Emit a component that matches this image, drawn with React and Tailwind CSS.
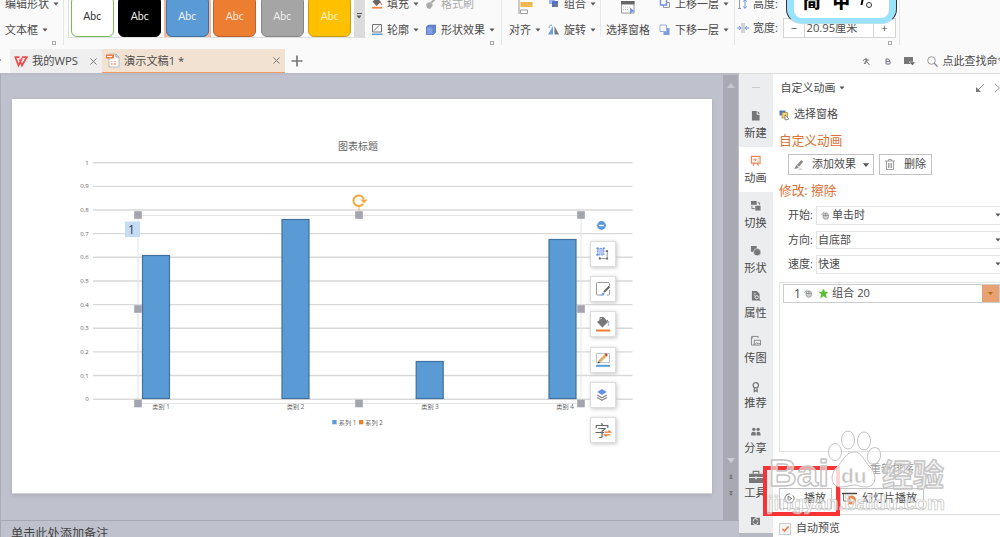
import React from "react";

const Caret = ({ className = "" }) => (
  <svg viewBox="0 0 6 4" className={"h-[4px] w-[6px] shrink-0 " + className} fill="#555">
    <path d="M0.5 0.5h5L3 3.5z" />
  </svg>
);

const Icon = ({ children, className = "h-[12px] w-[12px]", box = "0 0 12 12" }) => (
  <svg viewBox={box} className={"shrink-0 overflow-visible " + className} fill="none">
    {children}
  </svg>
);

const FillIcon = () => (
  <Icon>
    <path d="M1.5 3.500 6 0l4 4-4.500 4z" fill="#666" />
    <path d="M9 4l2 3" stroke="#d66" />
    <path d="M1 9.700h10" stroke="#f08a4b" strokeWidth="1.800" />
  </Icon>
);
const OutlineIcon = () => (
  <Icon>
    <path d="M1.500 .500h9v7.500h-9zM3 6.500l5-5" stroke="#777" />
    <path d="M1 10.300h10.500" stroke="#5aa1de" strokeWidth="1.600" />
  </Icon>
);
const BrushIcon = () => (
  <Icon>
    <path d="M1 6l4-2 3 3-3 4-3-1z" fill="#aaa" />
    <path d="M6 5l4-4" stroke="#aaa" strokeWidth="2" />
  </Icon>
);
const CubeIcon = () => (
  <Icon>
    <path d="M1 3h7v8H1z" fill="#7e9de6" />
    <path d="M1 3l2-2h8L8 3zM8 3l3-2v7l-3 3z" fill="#6a8ad6" />
    <path d="M1.500 3h6.500v7.500h-6.500zM8 3l2.500-2v7.500L8 10.500M2 3l1.500-2h7" stroke="#5b76b5" strokeWidth=".6" />
  </Icon>
);
const GroupIcon = () => (
  <Icon>
    <path d="M1 0h6v6H1z" fill="#9fb6ee" />
    <path d="M4 3h6v6H4z" fill="#5671bd" />
    <path d="M7 6h3v3H7z" fill="#777" />
  </Icon>
);
const RotateIcon = () => (
  <Icon>
    <path d="M5 2v8.500H0z" fill="#6aa0e8" />
    <path d="M6.500 2v8.500H11z" fill="#777" />
    <path d="M1 4c0-2 1-3 3-3" stroke="#6aa0e8" />
  </Icon>
);
const ForwardIcon = () => (
  <Icon>
    <path d="M4.500 4.500h6v5h-6z" fill="#fff" stroke="#999" />
    <path d="M1.500 1h6v6h-6z" fill="#fff" stroke="#7292e4" strokeWidth="1.500" />
  </Icon>
);
const BackwardIcon = () => (
  <Icon>
    <path d="M4.500 4h6v7h-6z" fill="#7f9be6" />
    <path d="M1 1h6.500v6.500H1z" fill="#fff" stroke="#9aaee0" />
  </Icon>
);

const Sep = ({ className = "h-[45px]" }) => <div className={"w-px shrink-0 bg-[#e6e6e6] " + className} />;

const Cmd = ({ icon, children, className = "", muted, caret = true }) => (
  <div className={"flex h-[26px] items-center whitespace-nowrap " + className}>
    {icon}
    <span className={"relative top-[.5px] " + (icon ? (muted ? "ml-[4px] text-[#aaa]" : "ml-[4px]") : "")}>{children}</span>
    {caret && <Caret className="ml-[4px]" />}
  </div>
);

const Launcher = () => <div className="mr-[7px] ml-auto h-[4px] w-[4px] shrink-0 border border-[#aaa]" />;

const swatches = [
  "bg-white border-[#78ba58] text-[#333]",
  "bg-black border-black text-[#eee]",
  "bg-[#5b9bd5] border-[#41719c] text-[#f2f2f2]",
  "bg-[#ed7d31] border-[#b96330] text-[#f9e7dc]",
  "bg-[#a5a5a5] border-[#858585] text-[#eee]",
  "bg-[#ffc000] border-[#c79b16] text-[#fff3c9]",
];

function Ribbon() {
  return (
    <div className="flex h-[49px] shrink-0 overflow-hidden">
      <div className="flex w-[63px] shrink-0 flex-col">
        <Cmd className="-mt-[9px] pl-[5px]">编辑形状</Cmd>
        <Cmd className="pl-[5px]">文本框</Cmd>
        <div className="-mt-[2px] flex"><Launcher /></div>
      </div>
      <Sep />
      <div className="ml-[3.500px] flex h-[38px] w-[298px] shrink-0 border-b border-l border-[#e0e0e0] bg-white">
        {swatches.map((s, i) => (
          <div key={i} className={"flex h-[37px] w-[47.500px] shrink-0 justify-center " + (i === 2 ? "bg-[#f3b8a0]" : "")}>
            <div className={"-mt-[4px] flex h-[41px] w-[43px] items-center justify-center rounded-[6px] border-[1.500px] font-['Lato','Open_Sans',sans-serif] text-[10.500px] " + s}>
              <span className="mt-[1px]">Abc</span>
            </div>
          </div>
        ))}
        <div className="flex w-[11px] flex-col items-center bg-[#dcdcdc] pt-[13px]">
          <div className="mb-[1px] h-px w-[5px] bg-[#555]" />
          <Caret />
        </div>
      </div>
      <div className="flex w-[135.500px] shrink-0 flex-col pl-[5.500px]">
        <div className="-mt-[9px] flex">
          <Cmd className="w-[54px]" icon={<FillIcon />}>填充</Cmd>
          <Cmd icon={<BrushIcon />} muted caret={false}>格式刷</Cmd>
        </div>
        <div className="flex">
          <Cmd className="w-[54px]" icon={<OutlineIcon />}>轮廓</Cmd>
          <Cmd icon={<CubeIcon />}>形状效果</Cmd>
        </div>
        <div className="-mt-[2px] flex"><Launcher /></div>
      </div>
      <Sep />
      <div className="flex w-[98px] shrink-0">
        <div className="flex w-[46px] flex-col pl-[7px]">
          <div className="h-[17px] pl-[9px]">
            <Icon className="h-[15px] w-[15px]" box="0 0 15 15">
              <path d="M1 0v14" stroke="#999" />
              <path d="M2.500 2h12v5h-12z" fill="#f4b64e" />
              <path d="M2.500 10h7v3.500h-7z" fill="#fff" stroke="#999" />
            </Icon>
          </div>
          <Cmd>对齐</Cmd>
        </div>
        <div className="flex flex-col">
          <Cmd className="-mt-[9px]" icon={<GroupIcon />}>组合</Cmd>
          <Cmd icon={<RotateIcon />}>旋转</Cmd>
        </div>
      </div>
      <Sep className="h-[36px]" />
      <div className="flex w-[133px] shrink-0">
        <div className="flex w-[57px] flex-col pl-[5px]">
          <div className="h-[17px] pl-[14px]">
            <Icon className="h-[15px] w-[15px]" box="0 0 15 15">
              <path d="M1.500 1.500h12.500v11.500h-12.500z" fill="#fff" stroke="#999" />
              <path d="M1 1h13.500v3.500H1z" fill="#666" />
              <path d="M3 7h8M3 9.500h5" stroke="#bbb" strokeDasharray="1 1" />
              <path d="M10 7.500l5 4-3 .500-2 2.500z" fill="#7394e6" />
            </Icon>
          </div>
          <Cmd caret={false}>选择窗格</Cmd>
        </div>
        <div className="flex flex-col pl-[1px]">
          <Cmd className="-mt-[9px]" icon={<ForwardIcon />}>上移一层</Cmd>
          <Cmd icon={<BackwardIcon />}>下移一层</Cmd>
        </div>
      </div>
      <Sep />
      <div className="flex w-[164px] shrink-0 flex-col pl-[2px]">
        <Cmd
          className="-mt-[9px]"
          caret={false}
          icon={
            <Icon>
              <path d="M2.500 1v10M1 1.500h3M1 10.500h3" stroke="#999" />
              <path d="M8 2v8M6.500 3.500 8 1.500l1.500 2M6.500 8.500 8 10.500l1.500-2" stroke="#6a92e2" />
            </Icon>
          }
        >
          高度:
        </Cmd>
        <div className="flex items-center">
          <Cmd
            className="-mt-[2px] w-[46px]"
            caret={false}
            icon={
              <Icon>
                <path d="M5 1v10M7 1v10" stroke="#aaa" />
                <path d="M0 6h4M8 6h4M2 4l2 2-2 2M10 4 8 6l2 2" stroke="#6a92e2" />
              </Icon>
            }
          >
            宽度:
          </Cmd>
          <div className="-mt-[3px] flex h-[20px] w-[113px] items-center border border-[#d4d4d4] bg-white text-center leading-[18px]">
            <span className="h-full w-[21px] border-r border-[#d4d4d4]">−</span>
            <span className="h-full flex-1 pl-[1.500px] text-left text-[11.200px]">20.95厘米</span>
            <span className="h-full w-[22px] border-l border-[#d4d4d4]">+</span>
          </div>
        </div>
        <div className="flex"><Launcher /></div>
      </div>
      <Sep />
    </div>
  );
}

function InputMethodBar() {
  return (
    <div className="absolute -top-[30px] left-[786px] flex h-[54px] w-[111px] rounded-[15px] border-x-[1.500px] border-b border-[#333] border-b-[#b9dfee] bg-[#9be2fd] px-[7px] pb-[5px]">
      <div className="flex flex-1 items-end rounded-[8px] bg-white pb-[7.500px] pl-[9px] text-[17.500px] leading-[20px] font-black text-black">
        <span>简</span>
        <span className="ml-[12px]">中</span>
        <span className="ml-[11px] flex items-center pb-[3px]">
          <span className="h-[5px] w-[2px] -skew-x-12 bg-black" />
          <span className="mt-[5px] ml-[3px] h-[6px] w-[6px] rounded-full border border-[#333]" />
        </span>
      </div>
    </div>
  );
}

const Close = () => (
  <Icon className="h-[7px] w-[7px]" box="0 0 7 7">
    <path d="M.5.500l6 6M6.500.500l-6 6" stroke="#777" />
  </Icon>
);

function TabBar() {
  return (
    <div className="flex h-[24px] shrink-0 items-center">
      <div className="flex w-[10px]"><Caret className="-ml-[4px]" /></div>
      <div className="flex h-full w-[92px] items-center bg-[#efefef] pr-[5px] pl-[4px]">
        <Icon className="h-[11px] w-[14px]" box="0 0 14 11">
          <path d="M.5 1.200h5M1.500 1.500l3 8L8 2M5.500 3.500l2.500 6 4.500-8M8 1.200h5.800" stroke="#ef4a4c" strokeWidth="1.700" />
        </Icon>
        <span className="mt-[1px] ml-[4px] text-[11.300px]">我的WPS</span>
        <span className="ml-auto"><Close /></span>
      </div>
      <div className="flex h-full w-[183px] items-center border-b border-[#ee9c6c] bg-[#f2e2d2] pr-[5px] pl-[4px]">
        <Icon className="h-[15px] w-[14px]" box="0 0 14 15">
          <path d="M3 1h7l3 3v10H3z" fill="#fff" stroke="#bbb" />
          <path d="M10 1v3h3" stroke="#999" />
          <path d="M0 1.500h8V5.500H0z" fill="#ed7b45" />
          <path d="M1 3.500h5" stroke="#fff" />
          <path d="M5 8h5v4H5z" fill="#f3b493" />
          <path d="M5 9.500h6M7 8v5" stroke="#fff" />
        </Icon>
        <span className="mt-[2px] ml-[4px] text-[11.200px]">演示文稿1 *</span>
        <span className="ml-auto"><Close /></span>
      </div>
      <Icon className="ml-[6px] h-[12px] w-[12px]">
        <path d="M6 .500v11M.500 6h11" stroke="#777" strokeWidth="1.700" />
      </Icon>
      <div className="ml-auto flex h-full w-[137px] items-center whitespace-nowrap">
        <Icon className="h-[7px] w-[7px]" box="0 0 7 7">
          <path d="M0 2.500 3 1v2L1 6M3 0l1 4 2.500 3M4 2h2M3.500 3.500 2 6" stroke="#777" />
        </Icon>
        <Icon className="ml-[15px] h-[7px] w-[6px]" box="0 0 6 7">
          <path d="M1 1h2.500L5 3v3H1zM1 3.500h4" stroke="#777788" />
        </Icon>
        <Icon className="ml-[13px] h-[10px] w-[12px]" box="0 0 12 10">
          <path d="M0 1h9v7H0z" fill="#777" />
          <path d="M5 6h6.500L8.500 9.500z" fill="#666" stroke="#fafafa" strokeWidth=".5" />
        </Icon>
        <div className="ml-[5px] h-[15px] w-px bg-[#ddd]" />
        <Icon className="ml-[6px] h-[11px] w-[11px]" box="0 0 11 11">
          <circle cx="4.500" cy="4.500" r="3.800" stroke="#999" />
          <path d="M7.300 7.300 10.500 10.500" stroke="#888" strokeWidth="1.300" />
        </Icon>
        <span className="ml-[4.500px] text-[11px]">点此查找命令</span>
      </div>
    </div>
  );
}

const ticks = ["1", "0.9", "0.8", "0.7", "0.6", "0.5", "0.4", "0.3", "0.2", "0.1", "0"];
const bars = [
  { x: 130.500, top: 156.500, label: "类别 1", lx: 149 },
  { x: 270, top: 120.500, label: "类别 2", lx: 283.500 },
  { x: 404.200, top: 262.500, label: "类别 3", lx: 418 },
  { x: 537, top: 140.500, label: "类别 4", lx: 553 },
];
const handles = [
  [126, 116], [347, 116], [569, 116], [126, 210], [569, 210], [126, 304.500], [347, 304.500], [569, 304.500],
];

function Chart() {
  return (
    <svg viewBox="0 0 700 394" className="h-[394px] w-[700px]" fill="none">
      <g fill="#666" fontSize="6.200">
        <text x="346" y="50.500" fontSize="10" textAnchor="middle">图表标题</text>
        {ticks.map((t, i) => (
          <g key={t}>
            <path d={"M81 " + (63.700 + i * 23.650) + "H620.500"} stroke="#d9d9d9" strokeWidth="1.400" />
            <text x="76.800" y={65.700 + i * 23.650} fontSize="6" textAnchor="end">{t}</text>
          </g>
        ))}
        {bars.map((b) => (
          <g key={b.label}>
            <rect x={b.x} y={b.top} width="27" height={299.500 - b.top} fill="#5b9bd5" stroke="#41719c" strokeWidth="1.200" />
            <text x={b.lx} y="310.300" textAnchor="middle">{b.label}</text>
          </g>
        ))}
        <rect x="320.300" y="321" width="4.300" height="4.300" fill="#5b9bd5" />
        <text x="326.800" y="325.500">系列 1</text>
        <rect x="347" y="321" width="4.300" height="4.300" fill="#ed7d31" />
        <text x="353.300" y="325.500">系列 2</text>
      </g>
      <rect x="126" y="116.500" width="443" height="188" stroke="#e4e4e4" strokeWidth="1" />
      {handles.map(([x, y]) => (
        <rect key={x + "-" + y} x={x - 3.800} y={y - 3.800} width="7.600" height="7.600" fill="#a2a4ae" />
      ))}
      <path d="M347 112v-5" stroke="#f5b34e" />
      <path d="M351 104.800a5.300 5.300 0 1 1 .800-4.500" stroke="#f4a83c" strokeWidth="2" />
      <path d="M348.500 100.500h7l-3.500 4z" fill="#f4a83c" />
      <rect x="113" y="122.500" width="15" height="15.500" fill="#c5dcf6" />
      <text x="119.500" y="134.500" fontSize="12" textAnchor="middle" fill="#334">1</text>
    </svg>
  );
}

const tools = [
  <Icon key="a" className="h-[13px] w-[13px]" box="1 1 14 14">
    <path d="M2.500 2.500h7v7h-7z" fill="#b7c9f5" stroke="#6a8de8" strokeDasharray="2 1" />
    <path d="M11 5.500h2v8H5v-2" stroke="#888" />
    <path d="M1.500 1.500h2v2h-2zM8.500 1.500h2v2h-2zM1.500 8.500h2v2h-2z" fill="#6a8de8" />
    <path d="M12 4.500h2v2h-2zM12 12.500h2v2h-2zM4 12.500h2v2H4z" fill="#666" />
  </Icon>,
  <Icon key="b" className="h-[16px] w-[16px]" box="0 0 16 16">
    <path d="M6 14H2.500Q1.500 14 1.500 13V2.500q0-1 1-1h11q1 0 1 1V5M14.500 9v4q0 1-1 1H12" stroke="#999" />
    <path d="M14.500 5.500 9 11" stroke="#666" strokeWidth="2" />
    <path d="M5.500 14.500c1 0 1-3 3-3l1 1c0 2-2 2.500-4 2z" fill="#6a9be8" />
  </Icon>,
  <Icon key="c" className="h-[16px] w-[16px]" box="0 0 16 16">
    <path d="M2 6 8.500 1 13 6l-5.500 5.500z" fill="#777" />
    <path d="M5 4V1.500h3M12 4q2 1 1.500 4" stroke="#777" />
    <path d="M13.500 5v5" stroke="#a7bbe8" strokeWidth="1.500" />
    <path d="M1 14.500h14" stroke="#ed7d31" strokeWidth="2" />
  </Icon>,
  <Icon key="d" className="h-[16px] w-[16px]" box="0 0 16 16">
    <path d="M1.500 1.500h13v9h-13z" fill="#fff" stroke="#b9c4ce" />
    <path d="M4 10 11 3" stroke="#e5ad66" strokeWidth="2.800" />
    <path d="M10.500 3.500 12 2" stroke="#c64d42" strokeWidth="2.800" />
    <path d="M2.500 11.500 5 10.800 3.300 9z" fill="#555" />
    <path d="M1 13.800h14" stroke="#5b9bd5" strokeWidth="2" />
  </Icon>,
  <Icon key="e" className="-ml-[2px] h-[12px] w-[12px]" box="1 1 14 15">
    <path d="M8 1l6 3.700-6 3.800-6-3.800z" fill="#6a8fe4" />
    <path d="M2 8.500 8 12l6-3.500M2 11.500 8 15l6-3.500" stroke="#888" strokeWidth="1.500" />
  </Icon>,
];

function Slide() {
  return (
    <div className="relative mt-[26px] ml-[12px] h-[395px] w-[700px] border-b border-[#d2d3d8] bg-white shadow-[0_1px_4px_#a6a8b2]">
      <Chart />
      <div className="absolute top-[121.500px] left-[577.500px] flex flex-col items-center">
        <Icon className="-ml-[2px] h-[9px] w-[9px]" box="0 0 9 9">
          <circle cx="4.500" cy="4.500" r="4.400" fill="#5d98df" />
          <path d="M2 4.500h5" stroke="#fff" strokeWidth="1.400" />
        </Icon>
        <div className="mt-[11px] flex flex-col gap-[9.400px]">
          {tools.map((t, i) => (
            <div key={i} className="flex h-[26px] w-[26px] items-center justify-center border border-[#ddd] bg-white shadow-[1px_1px_4px_#c6c6c6]">
              {t}
            </div>
          ))}
          <div className="flex h-[26px] w-[26px] items-center justify-center border border-[#ddd] bg-white text-[15px] leading-none text-[#666] shadow-[1px_1px_4px_#c6c6c6]">
            字
            <Icon className="mt-[6px] -ml-[6px] h-[7px] w-[7px]" box="0 0 7 7">
              <path d="M0 0h7v7H0z" fill="#fff" />
              <path d="M.5 2.200h6L4.500.500M6.500 4.800h-6l2 1.700" stroke="#ed7d31" strokeWidth="1.200" />
            </Icon>
          </div>
        </div>
      </div>
    </div>
  );
}

function Stage() {
  return (
    <div className="flex w-[739px] shrink-0 flex-col border-t-2 border-[#b9bbc5] bg-[#bfc2cc]">
      <div className="flex h-[445px]">
        <div className="-mt-[2px] w-[723px] shrink-0 border-l border-[#abaeb8]">
          <div className="-ml-[1px]"><Slide /></div>
        </div>
        <div className="flex w-[15px] flex-col items-center bg-[#a9a9b3] pt-[8px]">
          <Icon className="h-[5px] w-[8px]" box="0 0 8 5"><path d="M0 5h8L4 0z" fill="#c6c6ce" /></Icon>
          <Icon className="mt-[370px] h-[5px] w-[8px]" box="0 0 8 5"><path d="M0 0h8L4 5z" fill="#cdcdd3" /></Icon>
          <Icon className="mt-[11px] h-[5px] w-[4px]" box="0 0 5 6"><path d="M0 3l2.500-3L5 3zM0 6l2.500-3L5 6z" fill="#777" /></Icon>
          <Icon className="mt-[12px] h-[5px] w-[4px]" box="0 0 5 6"><path d="M0 0l2.500 3L5 0zM0 3l2.500 3L5 3z" fill="#777" /></Icon>
        </div>
      </div>
      <div className="flex-1 overflow-hidden border-t border-l border-[#a6a9b3] pt-[4px] pl-[10px] text-[12.200px] leading-[18px] whitespace-nowrap text-[#444]">
        单击此处添加备注
      </div>
    </div>
  );
}

const side = [
  ["新建", <path key="p" d="M2 1h5v4h3v6H2zM8 1l2.500 3H8z" fill="#777" />],
  ["动画", <g key="p" stroke="#ee8550"><path d="M1.500 1.500h9v7h-9zM3 11l1.500-2M9 11 7.500 9" strokeWidth="1.200" /><path d="M3 5h3.500M5 3.500 6.500 5 5 6.500M8 3.500h1M8 6.500h1" /></g>],
  ["切换", <g key="p" fill="#777"><path d="M1 1h6v4H1z" /><path d="M5.500 6H11v5H5.500z" /><path d="M2 6v3h3M8 3h2v2" stroke="#777" fill="none" /></g>],
  ["形状", <g key="p" fill="#777"><path d="M1 1h6v3L4 7H1z" /><circle cx="7.500" cy="7.500" r="3.800" stroke="#ecedef" strokeWidth=".6" /></g>],
  ["属性", <g key="p"><path d="M2 1h5l3 3v7H2z" fill="#777" /><path d="M4 4h2M4 6h1" stroke="#eee" /><circle cx="7" cy="7.500" r="1.700" stroke="#eee" /><path d="M8.500 9 11 11.500" stroke="#777" /></g>],
  ["传图", <g key="p" stroke="#888"><path d="M8.500 3V1.500h-7v9H4M4.500 5.500h6.500v5h-6.500z" /><path d="M5 10l2-2 1.500 1.500 1-1L11 10M1.500 3h2" /></g>],
  ["推荐", <g key="p" stroke="#777"><circle cx="6" cy="4.500" r="2.800" strokeWidth="1.300" /><path d="M4.500 7.500v3.500L6 10l1.500 1V7.500" strokeWidth="1.300" /></g>],
  ["分享", <g key="p" fill="#777"><circle cx="4" cy="3.500" r="1.800" /><circle cx="8.500" cy="3.500" r="1.800" /><path d="M1.200 10V8q0-2 2.800-2 2 0 2 2v2zM6.800 10V7.500Q6.800 6 8.500 6q2.500 0 2.500 2v2z" /></g>],
];

function SideBar() {
  return (
    <div className="flex w-[34px] shrink-0 flex-col items-center overflow-hidden border-t border-[#ddd] bg-[#ecedef]">
      <div className="mt-[13px] h-px w-[8px] shrink-0 bg-[#ccc]" />
      <div className="h-[14px] shrink-0" />
      {side.map(([label, art], i) => (
        <div key={label} className={"flex h-[45.100px] w-full shrink-0 flex-col items-center pt-[8px] " + (i === 1 ? "bg-white" : "")}>
          <Icon className="-ml-[1px] h-[11.500px] w-[11.500px]">{art}</Icon>
          <span className="mt-[3px] -ml-[1px] text-[11.200px] leading-[16px]">{label}</span>
        </div>
      ))}
      <div className="flex h-[45px] w-full shrink-0 flex-col items-center pt-[7px]">
        <Icon className="-ml-[1px] h-[13px] w-[14px]" box="0 0 15 14">
          <path d="M4.500 4V1.500h6V4" stroke="#777" strokeWidth="1.300" />
          <path d="M0 4h15v3.500H0zM0 8.500h15V14H0z" fill="#777" />
          <path d="M6.500 7h2v3h-2z" fill="#ddd" />
        </Icon>
        <span className="mt-[2px] -ml-[1px] text-[11.200px] leading-[16px]">工具</span>
      </div>
      <Icon className="mt-[8px] -ml-[1px] h-[9px] w-[9px]" box="0 0 10 10">
        <path d="M0 1h4l1 1h5v8H0z" fill="#777" />
        <path d="M2.500 6a2.500 2.500 0 0 1 5-1M7.500 6.500a2.500 2.500 0 0 1-5 1" stroke="#eee" />
      </Icon>
      <div className="mt-auto h-[4px] w-full bg-[#b6b8c2]" />
    </div>
  );
}

const Mouse = () => (
  <Icon className="h-[9px] w-[8px]" box="0 0 8 9">
    <path d="M.5 4 3 .500" stroke="#aaa" />
    <rect x="2" y="1.800" width="5.500" height="6.500" rx="2.700" fill="#ccc" stroke="#999" strokeWidth=".8" />
    <path d="M2 4.500h5.500M4.700 2v2.500" stroke="#888" strokeWidth=".7" />
  </Icon>
);

const Field = ({ label, children }) => (
  <div className="flex h-[24.500px] items-center pl-[15px]">
    <span className="w-[28px]">{label}</span>
    <div className="flex h-[18.500px] flex-1 items-center border border-r-0 border-[#e4e4e4] pl-[1px]">
      {children}
      <Caret className="-mr-[1px] ml-auto" />
    </div>
  </div>
);

const Button = ({ children, className }) => (
  <div className={"flex h-[21px] shrink-0 items-center border border-[#c2c2c2] bg-white whitespace-nowrap " + className}>{children}</div>
);

function Panel() {
  return (
    <div className="flex flex-1 flex-col overflow-hidden border-t border-[#ddd] bg-white">
      <div className="flex h-[27px] shrink-0 items-center pt-[1px] pl-[7.500px]">
        <span>自定义动画</span>
        <Caret className="ml-[3px]" />
        <Icon className="ml-auto h-[8px] w-[8px]" box="0 0 8 8">
          <path d="M8 0 2 6" stroke="#999" />
          <path d="M0 3v5h5z" fill="#777" />
        </Icon>
        <Icon className="ml-[11px] h-[8px] w-[5px]" box="0 0 5 8"><path d="M0 0l4.500 4L0 8" stroke="#999" /></Icon>
      </div>
      <div className="flex h-[27px] shrink-0 items-center pl-[6px]">
        <Icon className="h-[10px] w-[10px]" box="0 0 10 10">
          <path d="M.5.500h6v5h-6z" fill="#5478b8" />
          <path d="M3 2.500h5.500V8H3z" fill="#f3d271" stroke="#9a844c" strokeWidth=".7" />
          <path d="M6 5l4 4-2 .5L6 10z" fill="#fff" stroke="#666" strokeWidth=".7" />
        </Icon>
        <span className="ml-[5px]">选择窗格</span>
      </div>
      <div className="flex h-[26px] shrink-0 items-center pl-[6px] text-[12.700px] text-[#dc7033]">自定义动画</div>
      <div className="flex h-[22px] shrink-0 pl-[15px]">
        <Button className="-ml-[.5px] w-[86px] pl-[5px]">
          <Icon className="h-[11px] w-[11px]">
            <path d="M1 9 8 1l2 2-6 7-3.500 1z" fill="#888" />
            <path d="M3 7l3 2" stroke="#ddd" />
            <path d="M5 11h4" stroke="#bbb" />
          </Icon>
          <span className="ml-[7.500px]">添加效果</span>
          <Caret className="ml-[7px] scale-125" />
        </Button>
        <Button className="ml-[5.500px] w-[53px] pl-[5px]">
          <Icon className="h-[11px] w-[10px]" box="0 0 10 11">
            <path d="M0 2h10M3.500 2V.5h3V2M1.500 2v8.500h7V2M3.500 4v5M5 4v5M6.500 4v5" stroke="#888" strokeWidth=".8" />
          </Icon>
          <span className="ml-[9px]">删除</span>
        </Button>
      </div>
      <div className="flex h-[27px] shrink-0 items-center pt-[3px] pl-[6px] text-[12.700px] text-[#dc7033]">修改: 擦除</div>
      <div className="flex h-[74px] shrink-0 flex-col">
        <Field label="开始:"><span className="ml-[3px]"><Mouse /></span><span className="ml-[3px]">单击时</span></Field>
        <Field label="方向:">自底部</Field>
        <Field label="速度:">快速</Field>
      </div>
      <div className="mt-[5px] ml-[6px] h-[170px] shrink-0 border border-r-0 border-[#e4e4e4] pt-[1px] pl-[3px]">
        <div className="flex h-[19px] items-center border border-[#ccc] pl-[10px]">
          <span className="text-[12px]">1</span>
          <span className="ml-[3px]"><Mouse /></span>
          <Icon className="ml-[6px] h-[9px] w-[10px]" box="0 0 10 9">
            <path d="M5.500 0 7 3h3L7.700 5.200 8.500 9 5.500 7 2.500 9l.8-3.800L1 3h3zM0 2v1M0 6v1" fill="#5fbe38" stroke="#5fbe38" strokeWidth=".4" />
          </Icon>
          <span className="ml-[4px] text-[11.200px]">组合 20</span>
          <span className="ml-auto flex h-full w-[17px] items-center justify-center bg-[#e7a172]">
            <Icon className="h-[3px] w-[5px]" box="0 0 5 3"><path d="M0 0h5L2.500 3z" fill="#b36a14" /></Icon>
          </span>
        </div>
      </div>
      <div className="flex h-[36px] shrink-0 items-center pb-[2px] pl-[97px] text-[#999]">重新排序</div>
      <div className="flex h-[27px] shrink-0 border-b border-[#ddd] pl-[6px]">
        <Button className="w-[53px] pl-[4px]">
          <Icon className="h-[11px] w-[11px]">
            <circle cx="6" cy="6" r="5" stroke="#666" strokeDasharray="24 3" />
            <path d="M4.500 3.500 8.500 6l-4 2.500z" stroke="#666" />
          </Icon>
          <span className="ml-[9px]">播放</span>
        </Button>
        <Button className="ml-[8px] w-[84px] pl-[1px]">
          <Icon className="h-[14px] w-[15px]" box="0 0 15 14">
            <path d="M0 1.500h15" stroke="#444" strokeWidth="1.500" />
            <path d="M1.500 2v7h5M6 13l2-4" stroke="#777" />
            <circle cx="9.500" cy="8" r="4.500" fill="#ee8650" />
            <path d="M8.500 5.500 12 8l-3.500 2.500z" fill="#fff" />
          </Icon>
          <span className="ml-[5px]">幻灯片播放</span>
        </Button>
      </div>
      <div className="flex h-[25px] shrink-0 items-center pt-[2px] pl-[6px]">
        <span className="flex h-[12px] w-[12px] items-center justify-center border border-[#d0d0d0] bg-[#f4f4f4]">
          <Icon className="h-[6px] w-[7px]" box="0 0 7 6"><path d="M.5 3l2 2L6.500.500" stroke="#ee7f42" strokeWidth="1.600" /></Icon>
        </span>
        <span className="ml-[5px]">自动预览</span>
      </div>
    </div>
  );
}

function Watermark() {
  return (
    <svg viewBox="0 0 190 90" className="absolute top-[427px] left-[763px] h-[90px] w-[190px] font-['Liberation_Sans','Noto_Sans_CJK_SC',sans-serif]">
      <g fill="#fff" fillOpacity=".55" stroke="#c4c4c4" strokeWidth="1" strokeLinejoin="round">
        <ellipse cx="72" cy="25" rx="6.500" ry="8.500" />
        <ellipse cx="85" cy="13" rx="6.500" ry="9" />
        <ellipse cx="101" cy="14" rx="6.500" ry="9" />
        <ellipse cx="111" cy="29" rx="6.500" ry="8.500" transform="rotate(15 111 29)" />
        <path d="M91 25c8 0 10 9 16 15 8 8 6 20-4 20-5 0-8-2-12-2s-8 2-13 2c-10 0-12-12-4-20 6-6 9-15 17-15z" fillOpacity=".8" />
        <text x="6" y="59" fontSize="37" fontWeight="700" textLength="60" lengthAdjust="spacingAndGlyphs" strokeWidth="1.400">Bai</text>
        <text x="78" y="56" fontSize="21" fontWeight="700" fill="#c4c4c4" fillOpacity="1" stroke="#fff" strokeWidth=".5">du</text>
        <text x="119" y="59" fontSize="31" fontWeight="700" fill="#e2e2e2" strokeWidth="1.300">经验</text>
        <text x="5" y="83" fontSize="20" fontWeight="700" textLength="177" lengthAdjust="spacingAndGlyphs" strokeWidth=".7">jingyan.baidu.com</text>
      </g>
    </svg>
  );
}

export default function App() {
  return (
    <div className="relative flex h-[537px] w-[1000px] flex-col overflow-hidden bg-[#fafafa] font-['Open_Sans','Noto_Sans_CJK_SC',sans-serif] text-[11px] text-[#4a4a4a]">
      <Ribbon />
      <TabBar />
      <div className="flex min-h-0 flex-1">
        <Stage />
        <SideBar />
        <Panel />
      </div>
      <InputMethodBar />
      <div className="absolute top-[466px] left-[763px] h-[50px] w-[77px] border-[4.500px] border-[#f83335]" />
      <Watermark />
    </div>
  );
}
